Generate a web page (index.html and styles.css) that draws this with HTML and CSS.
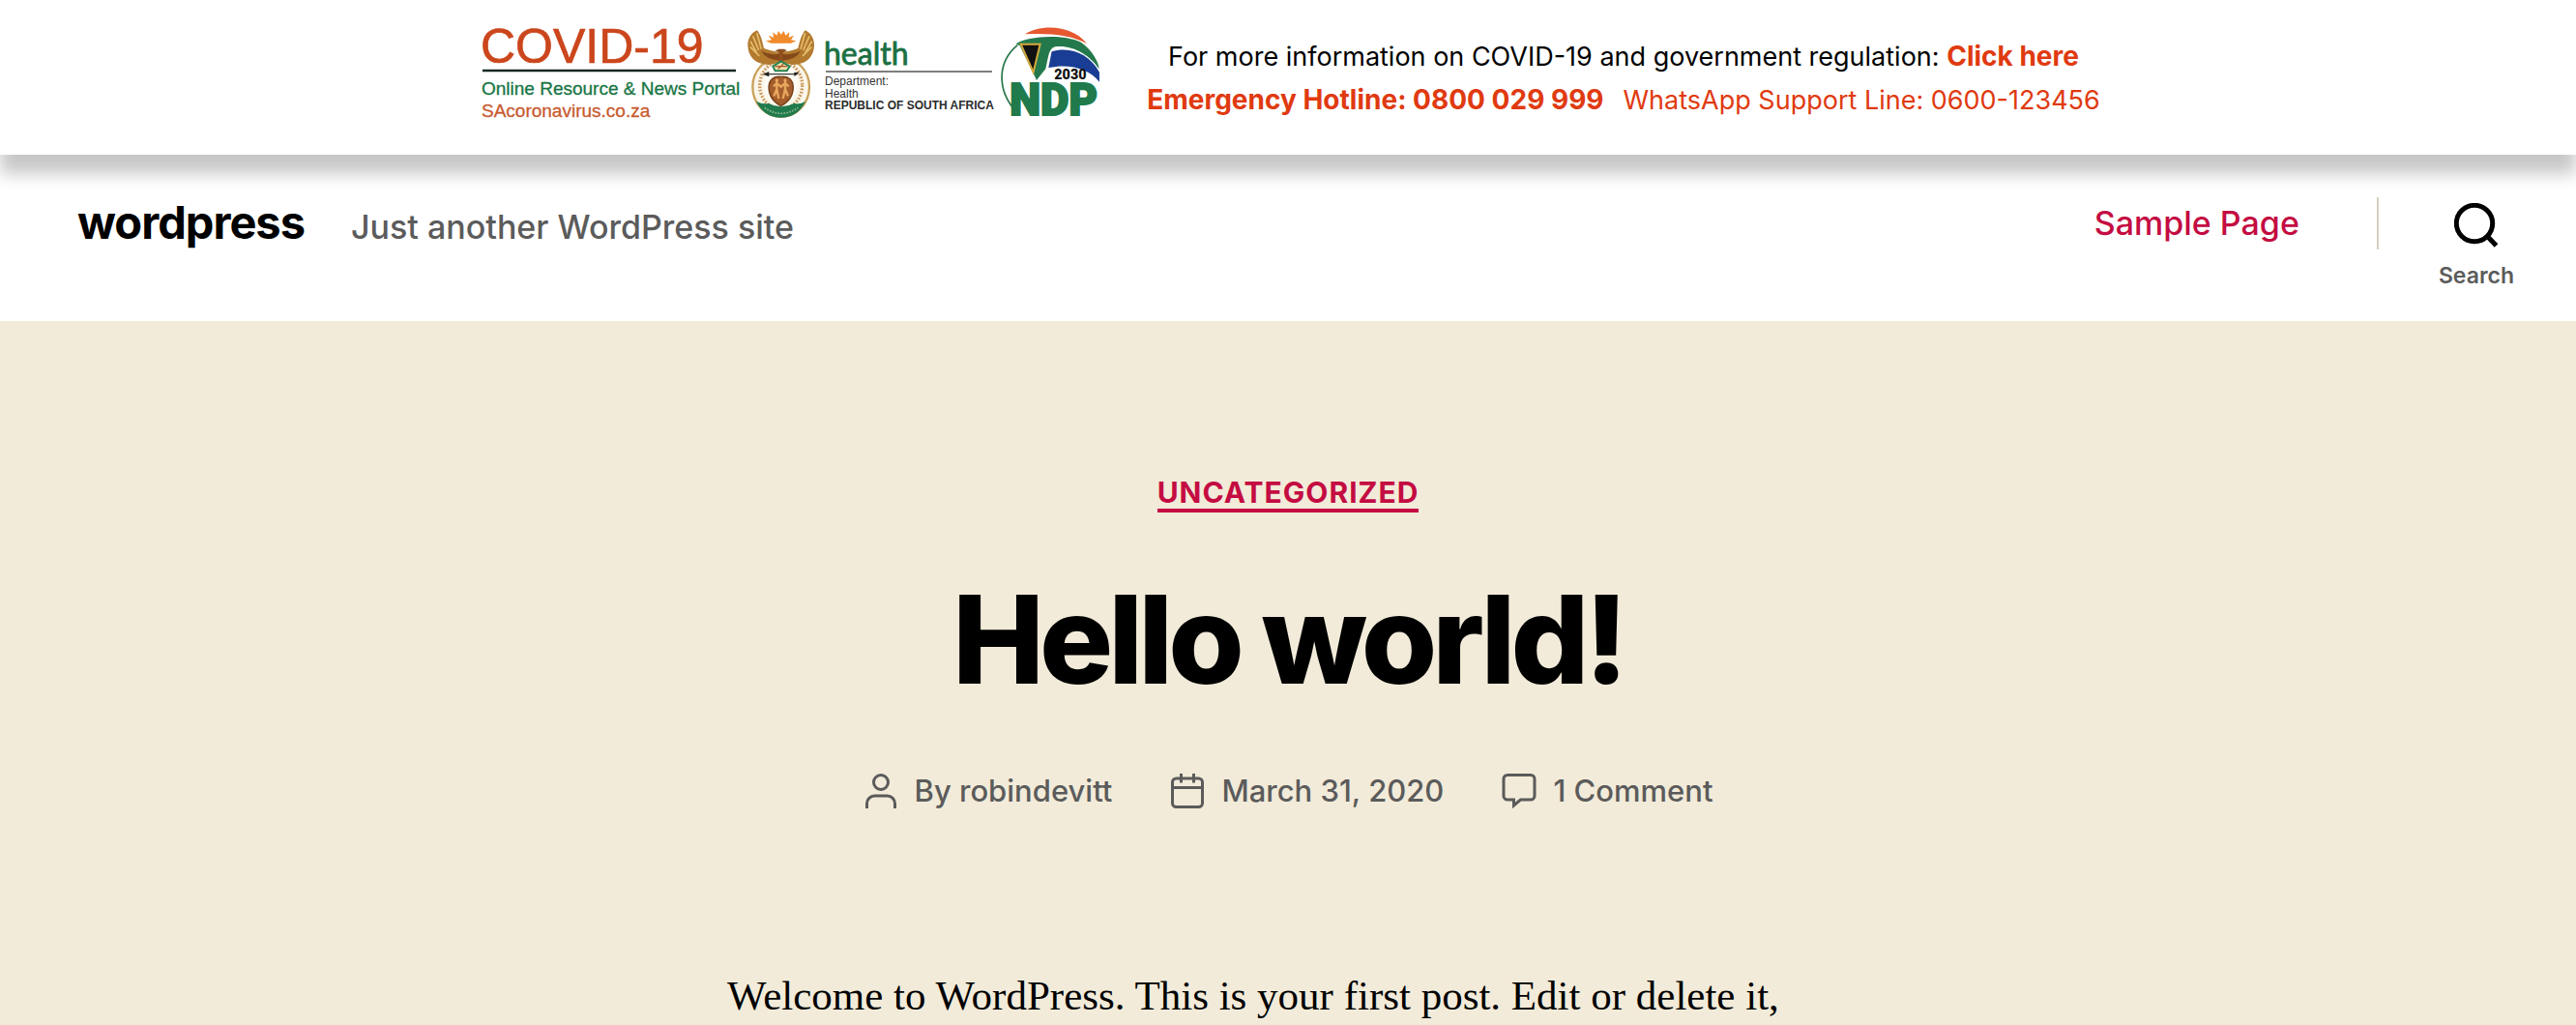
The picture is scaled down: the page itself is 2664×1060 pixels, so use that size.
FILE: index.html
```html
<!DOCTYPE html>
<html lang="en">
<head>
<meta charset="utf-8">
<meta name="viewport" content="width=device-width, initial-scale=1">
<title>Hello world! – wordpress</title>
<link rel="stylesheet" href="styles.css">
</head>
<body>
<aside class="notice">
  <svg class="notice-logo" viewBox="490 20 650 110" role="img" aria-label="COVID-19 Online Resource and News Portal">
    <g class="logo-sans">
      <text x="495" y="65" font-size="50" fill="#cb461c" stroke="#cb461c" stroke-width=".7">COVID-19</text>
      <path d="M497 73H759" stroke="#17291f" stroke-width="2.6"/>
      <text x="496" y="98" font-size="19" fill="#187544" stroke="#187544" stroke-width=".3">Online Resource &amp; News Portal</text>
      <text x="496" y="121" font-size="19" fill="#c8592f" stroke="#c8592f" stroke-width=".3">SAcoronavirus.co.za</text>
      <text class="logo-health" x="850" y="67" font-size="32" fill="#1b7043" stroke="#1b7043" stroke-width=".8">health</text>
      <path d="M852 74H1024" stroke="#555" stroke-width="1.5"/>
      <text x="851" y="88" font-size="12" fill="#333">Department:</text>
      <text x="851" y="101" font-size="12" fill="#333">Health</text>
      <text x="851" y="113" font-size="12" font-weight="700" fill="#2b2b2b">REPUBLIC OF SOUTH AFRICA</text>
    </g>
    <!-- coat of arms -->
    <g transform="translate(760 10) scale(.3333)">
      <ellipse cx="137" cy="240" rx="88" ry="92" fill="#fbf6ea" stroke="#c9a25a" stroke-width="7"/>
      <ellipse cx="137" cy="235" rx="66" ry="74" fill="none" stroke="#c9965a" stroke-width="10" stroke-dasharray="5 5"/>
      <ellipse cx="137" cy="228" rx="52" ry="66" fill="#fffdf6"/>
      <path d="M60 284Q84 296 98 290Q137 312 178 290Q194 296 213 284Q190 334 137 335Q84 334 60 284Z" fill="#217a4d"/>
      <path d="M86 304Q137 340 190 304" fill="none" stroke="#8fbb8c" stroke-width="5" stroke-dasharray="5 4"/>
      <path d="M137 208C160 206 174 216 175 240C175 268 160 287 137 299C114 287 99 268 99 240C100 216 114 206 137 208Z" fill="#a45d2c" stroke="#744219" stroke-width="4"/>
      <path d="M124 222V246L115 268M124 246L130 276M150 222V246L143 276M150 246L159 268M114 238L124 228L137 239L150 228L161 238" fill="none" stroke="#e9a85e" stroke-width="7"/>
      <circle cx="124" cy="219" r="5" fill="#e9a85e"/><circle cx="150" cy="219" r="5" fill="#e9a85e"/>
      <path d="M88 200H186" stroke="#393a35" stroke-width="4"/>
      <path d="M80 200L100 192V208ZM194 196L178 194V207Z" fill="#22231f"/>
      <path d="M90 97L108 94L98 80L114 86L112 70L124 80L129 66L137 77L146 66L151 80L163 70L161 86L177 80L168 94L184 97L168 104H106Z" fill="#f08b2c"/>
      <path d="M63 64C76 80 80 104 84 120Q106 128 128 132L126 126H148L146 132Q170 128 190 120C194 104 199 80 212 64C230 72 240 90 240 110C239 140 224 158 202 166Q169 178 137 160Q105 178 72 166C50 158 35 140 34 110C34 90 44 72 63 64Z" fill="#b27a2f"/>
      <path d="M62 72L76 122M50 82L68 126M42 98L62 134M42 116L70 144M212 72L198 122M225 82L206 126M233 98L212 134M232 116L204 144" stroke="#e5bd6a" stroke-width="5"/>
      <path d="M76 128Q106 144 137 136Q168 144 198 128Q184 156 137 158Q90 156 76 128Z" fill="#854919"/>
      <path d="M118 128L130 122H148L156 129L143 132V176H131V132Z" fill="#90511f"/>
      <path d="M112 176L137 160L164 176L155 190H119Z" fill="#eee2ab" stroke="#278252" stroke-width="6"/>
      <path d="M119 176H156M128 184L145 168" stroke="#a9572a" stroke-width="4"/>
    </g>
    <!-- NDP 2030 emblem -->
    <g transform="translate(760 10) scale(.3333)">
      <path d="M871 110C810 160 804 246 866 316" fill="none" stroke="#27764a" stroke-width="5"/>
      <path d="M894 76C940 46 1038 44 1086 106C1044 80 972 72 894 76Z" fill="#e65830"/>
      <path d="M866 106C900 82 1010 74 1068 101C1100 124 1122 158 1124 184C1084 126 1026 110 988 115C966 120 967 150 958 184L930 219L922 202L878 112Z" fill="#24794c"/>
      <path d="M881 107H941L920 194Z" fill="#111" stroke="#d6a83d" stroke-width="6"/>
      <path d="M977 130C1034 112 1096 138 1125 194V224C1093 184 1035 166 967 180Z" fill="#193d94"/>
      <text class="logo-emblem" x="985" y="217" font-size="43" fill="#111">2030</text>
      <text class="logo-emblem" x="847" y="327" font-size="136" fill="#207a4b" stroke="#207a4b" stroke-width="6">NDP</text>
    </g>
  </svg>
  <div class="notice-text">
    <p>For more information on COVID-19 and government regulation: <a class="strong" href="#info">Click here</a></p>
    <p class="contacts"><a class="strong" href="#hotline">Emergency Hotline: 0800 029 999</a><a href="#whatsapp">WhatsApp Support Line: 0600-123456</a></p>
  </div>
</aside>

<header class="site-header">
  <div class="site-titles">
    <a class="site-title" href="#home">wordpress</a>
    <span class="site-tagline">Just another WordPress site</span>
  </div>
  <nav class="site-nav"><a href="#sample-page">Sample Page</a></nav>
  <button class="search-toggle" type="button">
    <svg viewBox="0 0 46 46" aria-hidden="true"><circle cx="21" cy="21" r="18.7"/><path d="M33.5 33.5L43.5 44"/></svg>
    <span>Search</span>
  </button>
</header>

<main class="post">
  <a class="post-category" href="#uncategorized">Uncategorized</a>
  <h1 class="post-title">Hello world!</h1>
  <ul class="post-meta">
    <li>
      <svg viewBox="0 0 36 36" aria-hidden="true"><circle cx="18" cy="9" r="7.5"/><path d="M3.500 36V31a8 8 0 0 1 8-8h13a8 8 0 0 1 8 8v5"/></svg>
      <span>By <a href="#author">robindevitt</a></span>
    </li>
    <li>
      <svg viewBox="0 0 36 36" aria-hidden="true"><rect x="2.500" y="5" width="31" height="29.500" rx="4"/><path d="M2.500 14.500H33.500M11.500 0V9.500M24.500 0V9.500"/></svg>
      <a href="#date">March 31, 2020</a>
    </li>
    <li>
      <svg viewBox="0 0 36 36" aria-hidden="true"><path d="M6 1.500H30a4 4 0 0 1 4 4V23a4 4 0 0 1-4 4H19.500L12.500 33V27H6a4 4 0 0 1-4-4V5.500a4 4 0 0 1 4-4Z"/></svg>
      <a href="#comments">1 Comment</a>
    </li>
  </ul>
  <div class="post-content">
    <p>Welcome to WordPress. This is your first post. Edit or delete it,</p>
  </div>
</main>
</body>
</html>
```
FILE: styles.css
```css
* {
  box-sizing: border-box;
}

body {
  margin: 0;
  background: #f2ebd9;
  color: #000;
  font-family: Inter, "Liberation Sans", sans-serif;
}

a {
  color: inherit;
  text-decoration: none;
}

p {
  margin: 0;
}

.notice {
  position: relative;
  display: flex;
  justify-content: center;
  gap: 44px;
  padding: 20px 0 30px;
  background: #fff;
  box-shadow: 0 20px 16px rgba(0, 0, 0, 0.22);
}

.notice-logo {
  flex: none;
  width: 650px;
  height: 110px;
}

.logo-sans {
  font-family: "Liberation Sans", Arial, sans-serif;
}

.logo-health {
  font-family: Lato, sans-serif;
}

.logo-emblem {
  font-family: Roboto, sans-serif;
  font-weight: 900;
}

.notice-text {
  padding-top: 16px;
  font-size: 27px;
  line-height: 44px;
  text-align: center;
}

.notice-text a {
  color: #e03a10;
}

.notice-text .strong {
  font-size: 28px;
  font-weight: 700;
}

.contacts {
  display: flex;
  align-items: baseline;
  justify-content: center;
  gap: 20px;
}

.site-header {
  display: flex;
  align-items: flex-start;
  padding: 44px 64px 34px 80px;
  background: #fff;
}

.site-titles {
  display: flex;
  align-items: baseline;
  gap: 48px;
  line-height: 52px;
}

.site-title {
  font-size: 47px;
  font-weight: 700;
  letter-spacing: -1px;
}

.site-tagline {
  color: #5b5b5b;
  font-size: 34px;
  font-weight: 500;
}

.site-nav {
  margin-left: auto;
  padding-right: 80px;
  border-right: 2px solid #d5cfbe;
  color: #c40c42;
  font-size: 34px;
  font-weight: 500;
  line-height: 54px;
}

.search-toggle {
  display: flex;
  flex-direction: column;
  align-items: center;
  gap: 17px;
  margin-left: 62px;
  padding: 6px 0 0;
  border: 0;
  background: none;
  color: #5b5b5b;
  font: 600 23px/25px Inter, "Liberation Sans", sans-serif;
  cursor: pointer;
}

.search-toggle svg {
  width: 46px;
  height: 46px;
  fill: none;
  stroke: #000;
  stroke-width: 5;
}

.post {
  display: flex;
  flex-direction: column;
  align-items: center;
  padding-top: 162px;
}

.post-category {
  padding-bottom: 2px;
  border-bottom: 4px solid #c40c42;
  color: #c40c42;
  font-size: 30px;
  font-weight: 700;
  letter-spacing: 1px;
  line-height: 30px;
  text-transform: uppercase;
}

.post-title {
  margin: 67px 0 73px;
  font-size: 127px;
  font-weight: 800;
  letter-spacing: -5px;
  line-height: 128px;
}

.post-meta {
  display: flex;
  gap: 60px;
  margin: 0;
  padding: 0;
  color: #5b5b5b;
  font-size: 31px;
  font-weight: 500;
  line-height: 40px;
  list-style: none;
}

.post-meta li {
  display: flex;
  align-items: center;
  gap: 17px;
}

.post-meta svg {
  width: 36px;
  height: 36px;
  fill: none;
  stroke: currentColor;
  stroke-width: 3;
}

.post-content {
  width: 100%;
  max-width: 1160px;
  margin-top: 162px;
  font-family: "Liberation Serif", "Times New Roman", serif;
  font-size: 43px;
  line-height: 60px;
}
```
